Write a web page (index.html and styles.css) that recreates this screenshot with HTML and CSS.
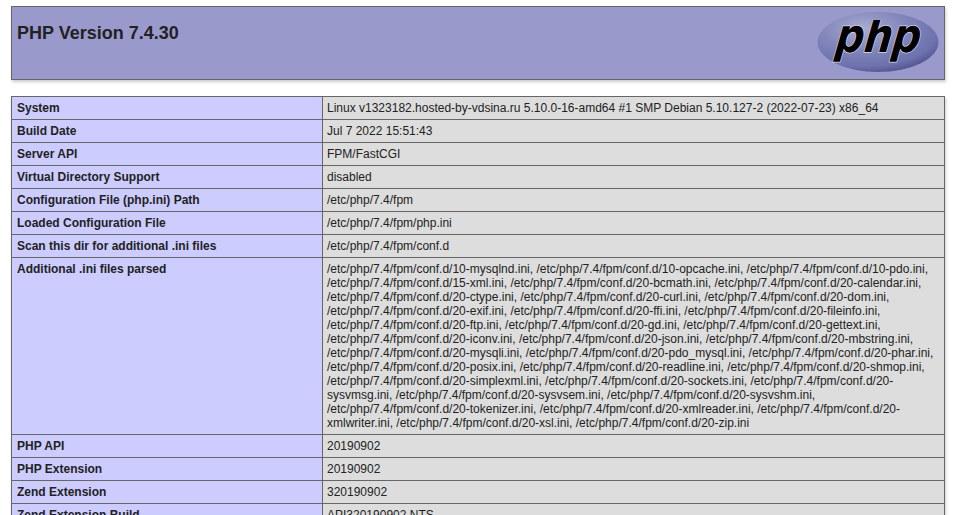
FILE: index.html
```html
<!DOCTYPE html>
<html lang="en">
<head>
<meta charset="utf-8">
<title>PHP 7.4.30 - phpinfo()</title>
<link rel="stylesheet" href="styles.css">
</head>
<body>
<div class="center">
<table class="header-table">
<tr class="h"><td>
<a href="#" class="logo-link"><svg class="logo" width="122" height="64" viewBox="0 0 122 64" role="img" aria-label="PHP logo">
<defs>
<radialGradient id="lg" cx="0.38" cy="0.28" r="0.78">
<stop offset="0" stop-color="#a9add2"/>
<stop offset="0.45" stop-color="#8286bb"/>
<stop offset="0.8" stop-color="#6e72ad"/>
<stop offset="1" stop-color="#4c4f8c"/>
</radialGradient>
<clipPath id="logo-clip"><rect x="0" y="9" width="122" height="55"/></clipPath>
</defs>
<ellipse cx="61" cy="31" rx="60.5" ry="30" fill="url(#lg)"/>
<g clip-path="url(#logo-clip)">
<text class="logo-text" transform="translate(60 41) skewX(-7)" text-anchor="middle" textLength="85" lengthAdjust="spacingAndGlyphs">php</text>
</g>
</svg></a>
<h1 class="p">PHP Version 7.4.30</h1>
</td></tr>
</table>
<table class="info-table">
<tr><td class="e">System </td><td class="v">Linux v1323182.hosted-by-vdsina.ru 5.10.0-16-amd64 #1 SMP Debian 5.10.127-2 (2022-07-23) x86_64 </td></tr>
<tr><td class="e">Build Date </td><td class="v">Jul 7 2022 15:51:43 </td></tr>
<tr><td class="e">Server API </td><td class="v">FPM/FastCGI </td></tr>
<tr><td class="e">Virtual Directory Support </td><td class="v">disabled </td></tr>
<tr><td class="e">Configuration File (php.ini) Path </td><td class="v">/etc/php/7.4/fpm </td></tr>
<tr><td class="e">Loaded Configuration File </td><td class="v">/etc/php/7.4/fpm/php.ini </td></tr>
<tr><td class="e">Scan this dir for additional .ini files </td><td class="v">/etc/php/7.4/fpm/conf.d </td></tr>
<tr><td class="e">Additional .ini files parsed </td><td class="v">/etc/php/7.4/fpm/conf.d/10-mysqlnd.ini, /etc/php/7.4/fpm/conf.d/10-opcache.ini, /etc/php/7.4/fpm/conf.d/10-pdo.ini, /etc/php/7.4/fpm/conf.d/15-xml.ini, /etc/php/7.4/fpm/conf.d/20-bcmath.ini, /etc/php/7.4/fpm/conf.d/20-calendar.ini, /etc/php/7.4/fpm/conf.d/20-ctype.ini, /etc/php/7.4/fpm/conf.d/20-curl.ini, /etc/php/7.4/fpm/conf.d/20-dom.ini, /etc/php/7.4/fpm/conf.d/20-exif.ini, /etc/php/7.4/fpm/conf.d/20-ffi.ini, /etc/php/7.4/fpm/conf.d/20-fileinfo.ini, /etc/php/7.4/fpm/conf.d/20-ftp.ini, /etc/php/7.4/fpm/conf.d/20-gd.ini, /etc/php/7.4/fpm/conf.d/20-gettext.ini, /etc/php/7.4/fpm/conf.d/20-iconv.ini, /etc/php/7.4/fpm/conf.d/20-json.ini, /etc/php/7.4/fpm/conf.d/20-mbstring.ini, /etc/php/7.4/fpm/conf.d/20-mysqli.ini, /etc/php/7.4/fpm/conf.d/20-pdo_mysql.ini, /etc/php/7.4/fpm/conf.d/20-phar.ini, /etc/php/7.4/fpm/conf.d/20-posix.ini, /etc/php/7.4/fpm/conf.d/20-readline.ini, /etc/php/7.4/fpm/conf.d/20-shmop.ini, /etc/php/7.4/fpm/conf.d/20-simplexml.ini, /etc/php/7.4/fpm/conf.d/20-sockets.ini, /etc/php/7.4/fpm/conf.d/20-sysvmsg.ini, /etc/php/7.4/fpm/conf.d/20-sysvsem.ini, /etc/php/7.4/fpm/conf.d/20-sysvshm.ini, /etc/php/7.4/fpm/conf.d/20-tokenizer.ini, /etc/php/7.4/fpm/conf.d/20-xmlreader.ini, /etc/php/7.4/fpm/conf.d/20-xmlwriter.ini, /etc/php/7.4/fpm/conf.d/20-xsl.ini, /etc/php/7.4/fpm/conf.d/20-zip.ini </td></tr>
<tr><td class="e">PHP API </td><td class="v">20190902 </td></tr>
<tr><td class="e">PHP Extension </td><td class="v">20190902 </td></tr>
<tr><td class="e">Zend Extension </td><td class="v">320190902 </td></tr>
<tr><td class="e">Zend Extension Build </td><td class="v">API320190902,NTS </td></tr>
</table>
</div>
</body>
</html>
```
FILE: styles.css
```css
html {
  overflow: hidden;
}
body {
  margin: 0;
  background: #fff;
  color: #222;
  font-family: "Liberation Sans", Arial, sans-serif;
}
.center {
  padding: 6px 0 0 11px;
}
table {
  border-collapse: collapse;
  border: 0;
  width: 934px;
  box-shadow: 1px 2px 3px #ccc;
  table-layout: fixed;
}
.info-table {
  margin-top: 16px;
}
td {
  border: 1px solid #666;
  font-size: 12px;
  line-height: 14px;
  vertical-align: baseline;
  padding: 4px 5px;
}
h1 {
  font-size: 18px;
  line-height: 21px;
  margin: 12px 0;
}
.h {
  background-color: #99c;
  font-weight: bold;
}
.logo-link {
  float: right;
}
.logo {
  display: block;
}
.logo-text {
  font-family: "DejaVu Sans", sans-serif;
  font-size: 47px;
  font-weight: bold;
  font-style: italic;
  fill: #000;
  stroke: #d5d6ea;
  stroke-width: 1.5px;
  paint-order: stroke;
}
.e {
  background-color: #ccf;
  width: 300px;
  font-weight: bold;
}
.v {
  background-color: #ddd;
  padding-left: 4px;
  word-wrap: break-word;
}
```
